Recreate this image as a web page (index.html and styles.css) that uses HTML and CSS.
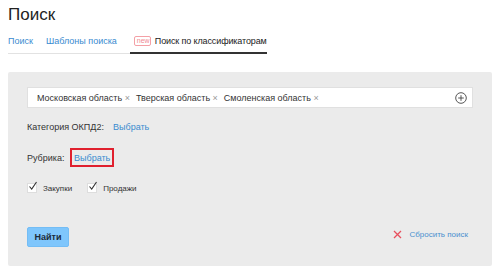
FILE: index.html
```html
<!DOCTYPE html>
<html lang="ru">
<head>
<meta charset="utf-8">
<link rel="stylesheet" href="styles.css">
</head>
<body>
<div class="page">
  <h1 class="title">Поиск</h1>
  <div class="tabs">
    <a class="tab">Поиск</a>
    <a class="tab">Шаблоны поиска</a>
    <a class="tab active"><span class="badge">new</span>Поиск по классификаторам</a>
  </div>
  <div class="panel">
    <div class="field">
      <span class="tag">Московская область <span class="x">×</span></span>
      <span class="tag">Тверская область <span class="x">×</span></span>
      <span class="tag">Смоленская область <span class="x">×</span></span>
      <svg class="plus" width="12" height="12" viewBox="0 0 12 12"><circle cx="6" cy="6" r="5.3" fill="none" stroke="#444" stroke-width="0.9"/><path d="M6 3.2v5.6M3.2 6h5.6" stroke="#444" stroke-width="0.9"/></svg>
    </div>
    <div class="row cat"><span class="label">Категория ОКПД2:</span><a class="link">Выбрать</a></div>
    <div class="row rub"><span class="label">Рубрика:</span><a class="link boxed">Выбрать</a></div>
    <div class="checks">
      <label class="check"><span class="box"><svg width="10" height="10" viewBox="0 0 10 10"><path d="M1.5 5.5l2.2 2.5L8.5 1" fill="none" stroke="#333" stroke-width="1.1"/></svg></span>Закупки</label>
      <label class="check"><span class="box"><svg width="10" height="10" viewBox="0 0 10 10"><path d="M1.5 5.5l2.2 2.5L8.5 1" fill="none" stroke="#333" stroke-width="1.1"/></svg></span>Продажи</label>
    </div>
    <div class="actions">
      <button class="btn">Найти</button>
      <a class="reset"><svg width="9" height="9" viewBox="0 0 9 9"><path d="M1 1l7 7M8 1L1 8" stroke="#e8505e" stroke-width="1.3"/></svg>Сбросить поиск</a>
    </div>
  </div>
</div>
</body>
</html>
```
FILE: styles.css
```css
* { box-sizing: border-box; }
body { margin: 0; background: #fff; font-family: "Liberation Sans", Arial, sans-serif; color: #333; }
.page { padding: 5px 8px 0 8px; }
.title { margin: 0; font-size: 17px; font-weight: normal; color: #222; line-height: 20px; }
.tabs { display: flex; width: 258px; border-bottom: 1px solid #e2e2e2; margin-top: 10px; font-size: 9px; }
.tab { color: #3a8bd0; padding: 0 0 5px 0; margin-right: 13px; line-height: 12px; white-space: nowrap; flex: none; }
.tab.active { color: #222; border-bottom: 2px solid #333; margin-bottom: -1px; margin-right: 0; margin-left: 0; padding-left: 4px; display: flex; align-items: center; flex: 1; letter-spacing: -0.12px; }
.badge { display: inline-block; border: 1px solid #f4a0a6; color: #f08a92; border-radius: 2px; font-size: 7px; line-height: 8px; padding: 0 2px; margin-right: 4px; width: 17px; text-align: center; letter-spacing: 0; }
.panel { margin-top: 18px; background: #ebebeb; height: 194px; padding: 15px 19px 0 19px; display: flex; flex-direction: column; border-radius: 2px; }
.field { background: #fff; border: 1px solid #e0e0e0; height: 21px; display: flex; align-items: center; padding: 0 5px 0 9px; font-size: 9px; color: #333; }
.tag { margin-right: 6px; white-space: nowrap; }
.x { color: #999; font-size: 9px; }
.plus { margin-left: auto; }
.row { display: flex; align-items: center; font-size: 9px; }
.cat { margin-top: 12px; height: 13px; }
.cat .label { width: 86px; }
.rub { margin-top: 15px; height: 19px; }
.rub .label { width: 43px; }
.link { color: #3a8bd0; }
.boxed { border: 2px solid #e0202e; padding: 0 2px; height: 19px; display: flex; align-items: center; }
.checks { display: flex; margin-top: 16px; font-size: 8px; }
.check { display: flex; align-items: center; margin-right: 15px; }
.box { width: 10px; height: 10px; background: #fff; border: 1px solid #ddd; margin-right: 6px; display: flex; position: relative; }
.box svg { position: absolute; left: 0; top: -3px; }
.actions { display: flex; align-items: flex-start; margin-top: 34px; }
.btn { background: #7fc6fc; border: 1px solid #74bdf5; border-radius: 2px; width: 42px; height: 20px; font-family: inherit; font-size: 9px; font-weight: bold; color: #1c2a3a; padding: 0; }
.reset { margin-left: auto; margin-right: 5px; margin-top: 3px; display: flex; align-items: center; color: #4a90cf; font-size: 8px; }
.reset svg { margin-right: 7px; }
```
